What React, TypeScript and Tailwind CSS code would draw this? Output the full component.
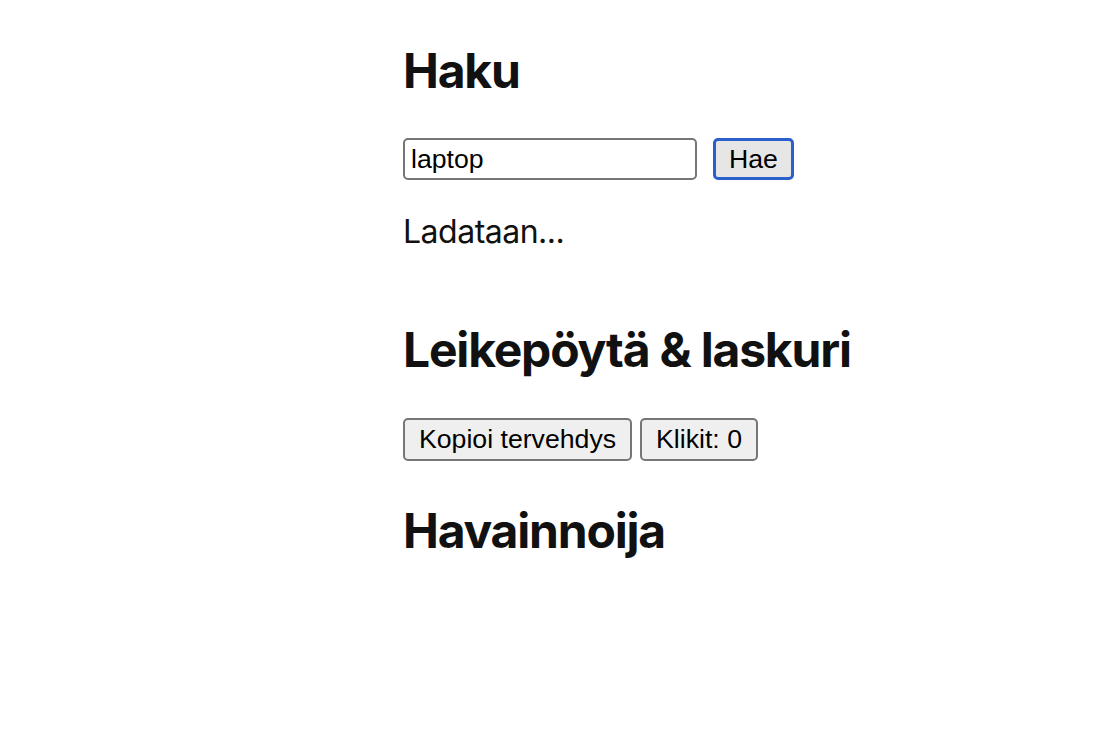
export default function App() {
  const ctrl = { fontFamily: '"Liberation Sans", Arial, sans-serif' };
  return (
    <div className="min-h-[742px] bg-white text-[#111111]" style={{ fontFamily: 'Inter, "Noto Sans", sans-serif' }}>
      <div className="ml-[403px] pt-[42px]">
        <h2 className="text-[48px] font-bold leading-[58px] tracking-[-1.2px]">Haku</h2>
        <div className="mt-[38px] flex items-center gap-[16px]">
          <input
            readOnly
            value="laptop"
            style={ctrl}
            className="h-[42px] w-[294px] rounded-[5px] border-2 border-[#767676] bg-white px-[6px] text-[26.67px] text-black outline-none"
          />
          <button
            style={ctrl}
            className="h-[42px] rounded-[5px] border-[3px] border-[#2a5fcc] bg-[#e6e6e6] px-[13px] text-[26.67px] leading-none text-black"
          >
            Hae
          </button>
        </div>
        <p className="mt-[32px] text-[32px] leading-[39px] tracking-[-0.5px]">Ladataan...</p>
        <h2 className="mt-[70px] text-[48px] font-bold leading-[58px] tracking-[-1.2px]">Leikepöytä &amp; laskuri</h2>
        <div className="mt-[39px] flex items-center gap-[8px]">
          <button
            style={ctrl}
            className="h-[43px] rounded-[5px] border-2 border-[#767676] bg-[#efefef] px-[14px] text-[26.67px] leading-none text-black"
          >
            Kopioi tervehdys
          </button>
          <button
            style={ctrl}
            className="h-[43px] rounded-[5px] border-2 border-[#767676] bg-[#efefef] px-[14px] text-[26.67px] leading-none text-black"
          >
            Klikit: 0
          </button>
        </div>
        <h2 className="mt-[41px] text-[48px] font-bold leading-[58px] tracking-[-1.2px]">Havainnoija</h2>
      </div>
    </div>
  );
}
